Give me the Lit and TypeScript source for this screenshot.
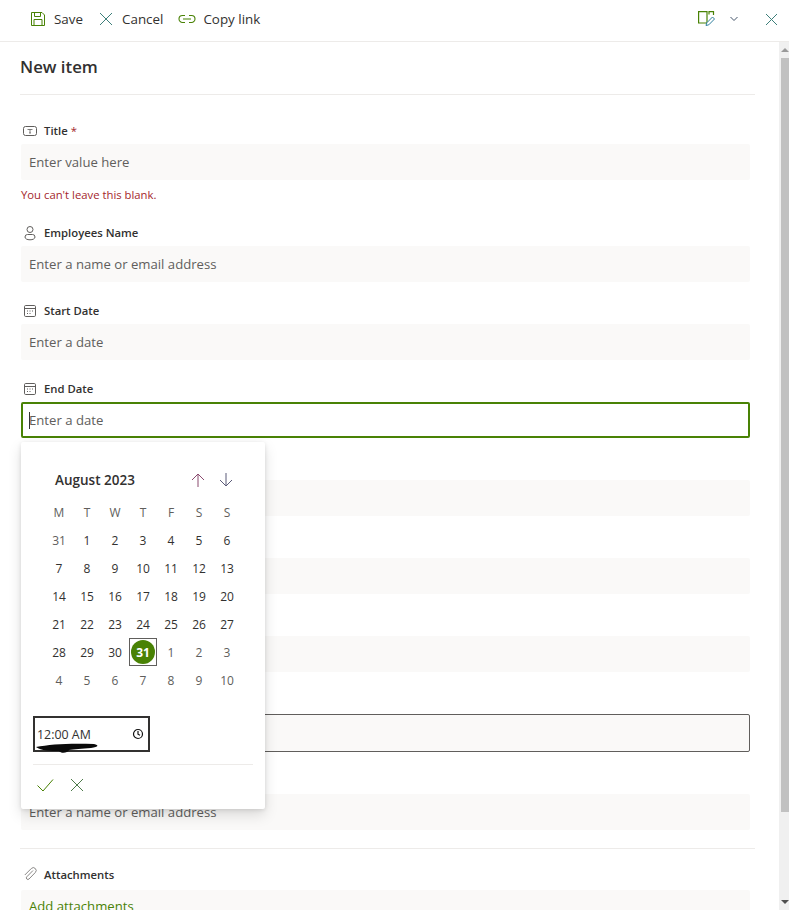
import { LitElement, html, css, svg } from "lit";
import { customElement } from "lit/decorators.js";

const calIcon = html`<svg class="ficon" viewBox="0 0 16 16" fill="none" stroke="#605e5c" stroke-width="1"><rect x="2.5" y="2.5" width="11" height="11" rx="1.2"/><path d="M2.5 5.5h11M5 8h1M7.5 8h1M10 8h1M5 10.5h1M7.5 10.5h1"/></svg>`;

const weeks = [
  [31, 1, 2, 3, 4, 5, 6],
  [7, 8, 9, 10, 11, 12, 13],
  [14, 15, 16, 17, 18, 19, 20],
  [21, 22, 23, 24, 25, 26, 27],
  [28, 29, 30, 31, 1, 2, 3],
  [4, 5, 6, 7, 8, 9, 10],
];

@customElement("app-root")
export class AppRoot extends LitElement {
  static styles = css`
    :host { display: block; width: 789px; height: 910px; overflow: hidden; position: relative; background: #fff; font-family: "Open Sans", "Noto Sans", sans-serif; color: #323130; font-size: 13px; }
    .frame { display: grid; grid-template-columns: 1fr 10px; grid-template-rows: 42px 1fr; height: 910px; }
    .bar { grid-column: 1 / 3; border-bottom: 1px solid #edebe9; display: flex; align-items: center; padding: 0 11px 3px 30px; }
    .cmd { display: flex; align-items: center; gap: 8px; margin-right: 15px; font-size: 13.4px; color: #323130; white-space: nowrap; }
    .cmd svg { width: 16px; height: 16px; display: block; }
    .cmd svg.wide { width: 18px; height: 18px; }
    .cmd.link-cmd { gap: 7px; }
    .spacer { flex: 1; }
    .right { display: flex; align-items: center; }
    .right svg { display: block; }
    .chev { margin-left: 14px; }
    .close { margin-left: 27px; }
    .main { padding: 0 24px 0 20px; overflow: hidden; min-width: 0; }
    h1 { margin: 0; font-size: 16.8px; font-weight: 600; line-height: 50px; height: 52px; border-bottom: 1px solid #edebe9; color: #323130; }
    .fields { padding: 25px 0 0 1px; width: 729px; }
    .field { margin-bottom: 18px; }
    .field.after-err { margin-bottom: 0; }
    .field.gap-top { margin-top: 24px; }
    .label { display: flex; align-items: center; gap: 6px; height: 24px; font-size: 11.3px; font-weight: 600; color: #323130; padding-left: 1px; padding-bottom: 3px; box-sizing: border-box; }
    .label.short { height: 20px; }
    .label.att { height: 29px; }
    .ficon { width: 16px; height: 16px; display: block; flex: none; }
    .req { color: #a4262c; font-weight: 400; margin-left: -3px; }
    .input { height: 36px; box-sizing: border-box; background: #faf9f8; padding: 0 8px; display: flex; align-items: center; font-size: 13.15px; color: #605e5c; border-radius: 2px; white-space: nowrap; }
    .input.focus { background: #fff; border: 2px solid #498205; padding: 0 6px; }
    .input.link { color: #498205; align-items: flex-start; padding-top: 7px; }
    .caret { width: 1px; height: 17px; background: #323130; margin-right: -1px; }
    .input.hover { height: 38px; border: 1px solid #605e5c; margin-bottom: -2px; }
    .error { font-size: 11.3px; color: #a4262c; height: 28px; display: flex; align-items: center; margin-bottom: 14px; }
    .sep { height: 1px; background: #edebe9; margin: 2px -5px 12px -1px; }
    .scroll { background: #f0f0f0; display: flex; flex-direction: column; align-items: flex-end; }
    .arrowbox { height: 16px; width: 8px; display: flex; align-items: center; justify-content: center; }
    .thumb { width: 8px; height: 754px; background: #c1c1c1; }
    .tri { width: 0; height: 0; border-left: 4px solid transparent; border-right: 4px solid transparent; }
    .tri.up { border-bottom: 4px solid #9a9a9a; }
    .tri.down { border-top: 4px solid #505050; }
    .grow { flex: 1; }

    .pop { position: absolute; left: 21px; top: 442px; width: 244px; height: 367px; background: #fff; box-shadow: 0 6px 14px rgba(0,0,0,.13), 0 1px 4px rgba(0,0,0,.11); border-radius: 2px; padding: 24px 12px 0 12px; box-sizing: border-box; }
    .cal-h { display: flex; align-items: center; height: 28px; padding: 0 0 0 22px; }
    .month { font-size: 13.5px; font-weight: 600; flex: 1; color: #323130; }
    .arrows { display: flex; gap: 12px; padding-right: 19px; }
    .arrows svg { width: 16px; height: 16px; display: block; }
    .grid { display: grid; grid-template-columns: repeat(7, 28px); grid-auto-rows: 28px; margin: 4px 0 0 12px; }
    .c { display: flex; align-items: center; justify-content: center; font-size: 12px; color: #323130; }
    .c.wd, .c.out { color: #605e5c; }
    .c.sel { border: 1px solid #605e5c; box-sizing: border-box; }
    .dot { width: 24px; height: 24px; border-radius: 50%; background: #498205; color: #fff; font-weight: 700; display: flex; align-items: center; justify-content: center; font-size: 12px; }
    .time { width: 117px; height: 36px; margin-top: 22px; box-sizing: border-box; border: 2px solid #323130; display: flex; align-items: center; justify-content: space-between; padding: 0 4px 0 2px; font-size: 12.4px; color: #323130; position: relative; }
    .scribble { position: absolute; left: 0; top: 24px; width: 66px; height: 13px; }
    .time svg.clock { width: 12px; height: 12px; display: block; }
    .pop-sep { height: 1px; background: #edebe9; margin-top: 12px; }
    .acts { display: flex; gap: 14px; padding: 11px 0 0 3px; }
    .acts svg { width: 18px; height: 18px; display: block; }
  `;

  render() {
    return html`
      <div class="frame">
        <div class="bar">
          <div class="cmd">
            <svg viewBox="0 0 16 16" fill="none" stroke="#498205" stroke-width="1"><path d="M1.500 1.500h10.500l2.500 2.500v10.500h-13zM4.500 1.500v4h6v-4M4 14.500v-6h8v6"/></svg>Save
          </div>
          <div class="cmd">
            <svg viewBox="0 0 16 16" fill="none" stroke="#3d7f7a" stroke-width="1"><path d="M2 2l12 12M14 2L2 14"/></svg>Cancel
          </div>
          <div class="cmd link-cmd">
            <svg class="wide" viewBox="0 0 18 18" fill="none" stroke="#498205" stroke-width="1.100"><path d="M7 5.500H4.500a3.500 3.500 0 0 0 0 7H7M11 5.500h2.500a3.500 3.500 0 0 1 0 7H11M5 9h8"/></svg>Copy link
          </div>
          <div class="spacer"></div>
          <div class="right">
            <svg width="18" height="18" viewBox="0 0 18 18" fill="none"><path d="M.6 1.600H9V13H.6zM11 4.500V1.600h4.500V5" stroke="#498205" stroke-width="1.200"/><path d="M8 15.500l.8-2.700L14.500 7l2 2-5.700 5.800z" stroke="#2f7f9e" fill="#fff"/></svg>
            <svg class="chev" width="8" height="6" viewBox="0 0 8 6" fill="none" stroke="#44546a"><path d="M.5 1l3.500 3.500L7.500 1"/></svg>
            <svg class="close" width="13" height="13" viewBox="0 0 13 13" fill="none" stroke="#3d7f7a"><path d="M1 1l11 11M12 1L1 12"/></svg>
          </div>
        </div>
        <div class="main">
          <h1>New item</h1>
          <div class="fields">
            <div class="field after-err">
              <div class="label">
                <svg class="ficon" viewBox="0 0 16 16" fill="none" stroke="#605e5c"><rect x="1.500" y="3.500" width="13" height="9" rx="2"/><path d="M5.500 6.500h5M8 6.500v3.500M7 10h2" stroke-width=".8"/></svg>
                Title <span class="req">*</span>
              </div>
              <div class="input">Enter value here</div>
              <div class="error">You can't leave this blank.</div>
            </div>
            <div class="field">
              <div class="label">
                <svg class="ficon" viewBox="0 0 16 16" fill="none" stroke="#605e5c"><circle cx="8" cy="4.500" r="3"/><path d="M3 12a2.500 2.500 0 0 1 2.500-2.500h5A2.500 2.500 0 0 1 13 12c0 1.800-2.200 2.800-5 2.800S3 13.800 3 12z"/></svg>
                Employees Name
              </div>
              <div class="input">Enter a name or email address</div>
            </div>
            <div class="field">
              <div class="label">${calIcon}Start Date</div>
              <div class="input">Enter a date</div>
            </div>
            <div class="field">
              <div class="label">${calIcon}End Date</div>
              <div class="input focus"><span class="caret"></span>Enter a date</div>
            </div>
            <div class="field"><div class="label"></div><div class="input"></div></div>
            <div class="field"><div class="label"></div><div class="input"></div></div>
            <div class="field"><div class="label"></div><div class="input"></div></div>
            <div class="field"><div class="label"></div><div class="input hover"></div></div>
            <div class="field gap-top">
              <div class="label short"></div>
              <div class="input">Enter a name or email address</div>
            </div>
            <div class="sep"></div>
            <div class="label att">
              <svg class="ficon" viewBox="0 0 16 16" fill="none" stroke="#8a8886"><path d="M11 4.500L4.800 10.800a1.500 1.500 0 0 0 2.200 2.200l6.300-6.500a2.800 2.800 0 0 0-4-4L2.800 9"/></svg>
              Attachments
            </div>
            <div class="input link">Add attachments</div>
          </div>
        </div>
        <div class="scroll">
          <div class="arrowbox"><span class="tri up"></span></div>
          <div class="thumb"></div>
          <div class="grow"></div>
          <div class="arrowbox"><span class="tri down"></span></div>
        </div>
      </div>

      <div class="pop">
        <div class="cal-h">
          <div class="month">August 2023</div>
          <div class="arrows">
            <svg viewBox="0 0 16 16" fill="none" stroke="#8a4a6e"><path d="M8 15V2M2 8l6-6 6 6"/></svg>
            <svg viewBox="0 0 16 16" fill="none" stroke="#5a5a78"><path d="M8 1v13M2 8l6 6 6-6"/></svg>
          </div>
        </div>
        <div class="grid">
          ${["M", "T", "W", "T", "F", "S", "S"].map((d) => html`<div class="c wd">${d}</div>`)}
          ${weeks.map((w, ri) =>
            w.map((d, ci) => {
              if (ri === 4 && ci === 3) return html`<div class="c sel"><div class="dot">31</div></div>`;
              const out = (ri === 0 && ci === 0) || (ri === 4 && ci > 3) || ri === 5;
              return html`<div class="c ${out ? "out" : ""}">${d}</div>`;
            })
          )}
        </div>
        <div class="time">
          12:00 AM
          <svg class="clock" viewBox="0 0 12 12" fill="none" stroke="#111" stroke-width="1.200"><circle cx="6" cy="6" r="4.500"/><path d="M6 3v3.200l2 1"/></svg>
          <svg class="scribble" viewBox="0 0 66 13">${svg`<path d="M1 5c14-3 36-4 58-3 5 1 5 3-3 4-9 1-17 1-22 2-1 3-8 4-10 1-8 0-18 0-23-4z" fill="#0a0a0a"/>`}</svg>
        </div>
        <div class="pop-sep"></div>
        <div class="acts">
          <svg viewBox="0 0 18 18" fill="none" stroke="#498205"><path d="M1.500 9.500l5.500 5.500L17 3.500"/></svg>
          <svg viewBox="0 0 18 18" fill="none" stroke="#4d7a4a"><path d="M3 3l12 12M15 3L3 15"/></svg>
        </div>
      </div>
    `;
  }
}
